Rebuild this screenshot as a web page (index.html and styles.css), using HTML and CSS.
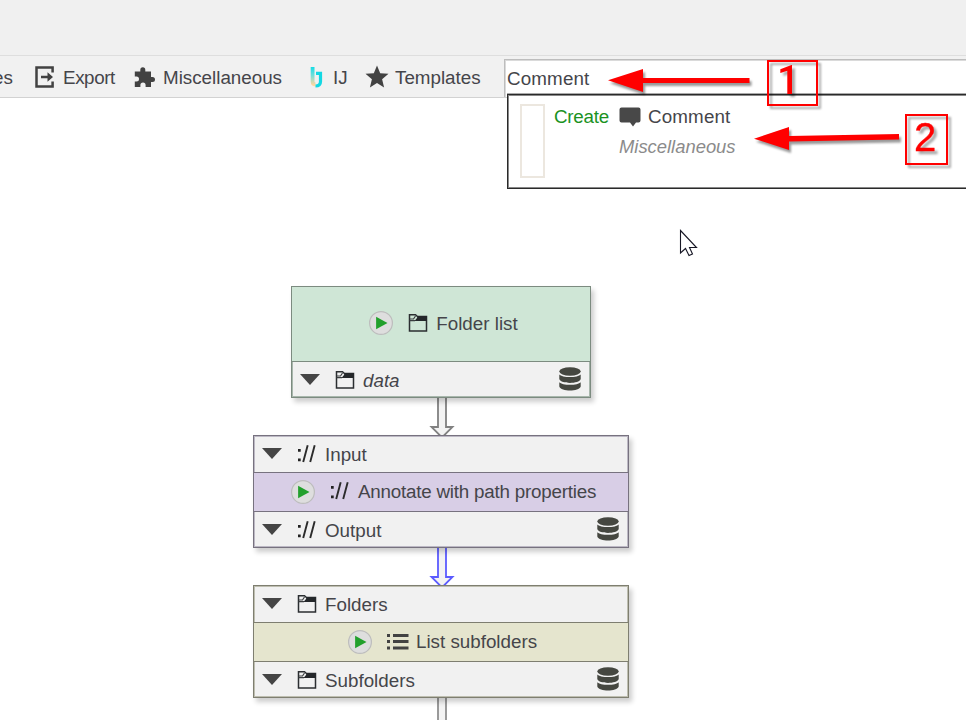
FILE: index.html
```html
<!DOCTYPE html>
<html lang="en">
<head>
<meta charset="utf-8">
<title>Workflow editor</title>
<link rel="stylesheet" href="styles.css">
</head>
<body>
<svg class="defs" width="0" height="0" aria-hidden="true">
  <defs>
    <symbol id="folder" viewBox="0 0 20 20"><path d="M1.5 18V1.8H7.5L9.5 3.5H18.5V18Z" fill="none" stroke="#2b2e31" stroke-width="1.5"/><path d="M9.5 3H19V8H6.5L9 5Z" fill="#24272a"/><path d="M1.5 7.7H7M2 6H5.5L7.5 3" fill="none" stroke="#3b3e40" stroke-width="1.2"/></symbol>
    <symbol id="db" viewBox="0 0 22 24"><g fill="#454740"><ellipse cx="11" cy="4.5" rx="10.7" ry="4.2"/><path d="M.3 7.4C3 10.8 19 10.8 21.7 7.4V12C20 17.2 2 17.2.3 12Z"/><path d="M.3 15.2C3 18.6 19 18.6 21.7 15.2V19.6C20 24.9 2 24.9.3 19.6Z"/></g></symbol>
    <symbol id="play" viewBox="0 0 26 26"><circle cx="13" cy="13" r="11.4" fill="#dedede" stroke="#bdbdbd" stroke-width="1.2"/><path d="M8.1 6.7 19.5 13 8.1 19.2Z" fill="#22a02c"/></symbol>
    <symbol id="path" viewBox="0 0 20 20"><path d="M1 5h2.7v2.7H1zM1 14.5h2.7v2.7H1z" fill="#222"/><path d="M6.2 18 10.7 1.2M13.2 18 17.7 1.2" fill="none" stroke="#2b2b2b" stroke-width="1.9"/></symbol>
    <symbol id="caret" viewBox="0 0 20 11"><path d="M0 0H20L10 11Z" fill="#454545"/></symbol>
    <symbol id="list" viewBox="0 0 22 16"><path d="M0 0h3v3H0zM0 6h3v3H0zM0 12.4h3v3H0zM6 0h15.5v3H6zM6 6h15.5v3H6zM6 12.4h15.5v3H6z" fill="#424242"/></symbol>
  </defs>
</svg>
<div class="app">
  <div class="titlebar"></div>
  <div class="toolbar">
    <span class="item es">es</span>
    <span class="item export"><svg width="20" height="22" viewBox="0 0 20 22"><path d="M17.6 6.5V1.6H1.5V20.4H17.6V15.5" fill="none" stroke="#424242" stroke-width="2.5"/><path d="M6 9.7h6.5V6.2L18 11 12.5 15.8V12.3H6Z" fill="#424242"/></svg><span>Export</span></span>
    <span class="item misc"><svg width="22" height="22" viewBox="0 0 22 22"><path d="M.8 5.5H6.3V4A2.5 2.8 0 0 1 11.3 4V5.5H17V11H18.5A2.5 2.5 0 0 1 18.5 16H17V21H11.6V19A2.6 2.6 0 0 0 6.4 19V21H.8V15.6H2.5A2.5 2.5 0 0 0 2.5 10.6H.8Z" fill="#424242"/></svg><span>Miscellaneous</span></span>
    <span class="item ij"><svg width="13" height="22" viewBox="0 0 13 22"><defs><linearGradient id="ijg" x1="0" y1="1" x2="0" y2="19" gradientUnits="userSpaceOnUse"><stop stop-color="#15dce5"/><stop offset=".45" stop-color="#6edfda"/><stop offset="1" stop-color="#ffd7a0"/></linearGradient></defs><path d="M2.6 1V15.5Q2.6 18.5 5.5 18.5" fill="none" stroke="url(#ijg)" stroke-width="3.8"/><path d="M6 7.4H10.5V15.5Q10.5 20 5.5 20" fill="none" stroke="#13d8e3" stroke-width="3.2"/></svg><span>IJ</span></span>
    <span class="item tpl"><svg width="24" height="23" viewBox="0 0 24 23"><path d="m12 .4 3.2 7.8 8.3.6-6.4 5.4 2 8.2L12 18l-7.1 4.4 2-8.2L.5 8.8l8.3-.6Z" fill="#424242"/></svg><span>Templates</span></span>
    <div class="search">Comment</div>
  </div>
  <div class="canvas">
    <svg class="links" width="966" height="622" viewBox="0 98 966 622">
      <g fill="#f3f3f3">
        <path d="M438 397V427H431.5L442 437.5 452.5 427H446V397" stroke="#818181" stroke-width="1.8"/>
        <path d="M438 547V577H431.5L442 587.5 452.5 577H446V547" stroke="#5b5bff" stroke-width="1.8"/>
        <path d="M438 697V722H446V697" stroke="#909090" stroke-width="1.8"/>
      </g>
    </svg>
    <section class="node source">
      <div class="head"><svg class="play"><use href="#play"/></svg><svg class="ic"><use href="#folder"/></svg><span class="label">Folder list</span></div>
      <div class="slot"><svg class="caret"><use href="#caret"/></svg><svg class="ic"><use href="#folder"/></svg><i class="label">data</i><svg class="db"><use href="#db"/></svg></div>
    </section>
    <section class="node annotate">
      <div class="slot"><svg class="caret"><use href="#caret"/></svg><svg class="ic"><use href="#path"/></svg><span class="label">Input</span></div>
      <div class="head"><svg class="play"><use href="#play"/></svg><svg class="ic"><use href="#path"/></svg><span class="label">Annotate with path properties</span></div>
      <div class="slot"><svg class="caret"><use href="#caret"/></svg><svg class="ic"><use href="#path"/></svg><span class="label">Output</span><svg class="db"><use href="#db"/></svg></div>
    </section>
    <section class="node subfolders">
      <div class="slot"><svg class="caret"><use href="#caret"/></svg><svg class="ic"><use href="#folder"/></svg><span class="label">Folders</span></div>
      <div class="head"><svg class="play"><use href="#play"/></svg><svg class="list"><use href="#list"/></svg><span class="label">List subfolders</span></div>
      <div class="slot"><svg class="caret"><use href="#caret"/></svg><svg class="ic"><use href="#folder"/></svg><span class="label">Subfolders</span><svg class="db"><use href="#db"/></svg></div>
    </section>
  </div>
  <div class="popup">
    <div class="swatch"></div>
    <span class="create">Create</span>
    <div class="result">
      <div class="name"><svg width="22" height="20" viewBox="0 0 22 20"><path d="M2.5.5h17q2 0 2 2v11q0 2-2 2H17L14 19.5 11 15.5H2.5q-2 0-2-2v-11q0-2 2-2Z" fill="#484848"/></svg><span>Comment</span></div>
      <div class="category">Miscellaneous</div>
    </div>
  </div>
  <svg class="pointer" width="20" height="29" viewBox="0 0 20 29"><path d="M1.5 1.5V24L6.5 19.5 10 26.5 13.5 25 10.5 18.5H17.5Z" fill="#fff" stroke="#171725" stroke-width="1.1"/></svg>
  <svg class="arrows" width="966" height="200" viewBox="0 0 966 200"><g fill="#f00"><path d="M608 80.3 643 69V78H749.5V83H643V92Z"/><path d="M754 138.7 789 127V136L899 134V139.5L789 141.5V150Z"/></g></svg>
  <div class="callout one"><span>1</span></div>
  <div class="callout two"><span>2</span></div>
</div>
</body>
</html>
```
FILE: styles.css
```css
* { box-sizing: border-box; }
body { margin: 0; background: #fff; color: #45454a; font: 18.8px/22px "Liberation Sans", Arial, sans-serif; }
svg { display: block; flex: none; }
.defs { position: absolute; }
.app { position: relative; width: 966px; height: 720px; overflow: hidden; }
.titlebar { height: 56px; background: #f0f0f0; border-bottom: 1px solid #dedede; }
.toolbar { display: flex; align-items: center; height: 42px; background: #f1f1f1; border-bottom: 1px solid #d2d2d2; white-space: nowrap; }
.item { display: flex; align-items: center; flex: none; }
.item span, .item.es { padding-top: 2px; }
.es { width: 35px; margin-left: -7px; }
.item.export { margin-left: 7px; width: 99px; gap: 8px; }
.item.export span { letter-spacing: -.4px; }
.misc { width: 174px; gap: 7px; }
.ij { width: 57px; padding-left: 2px; gap: 10px; }
.tpl { width: 139px; gap: 6px; }
.search { flex: 1; height: 38px; align-self: flex-end; background: #fff; border: solid #bdbdbd; border-width: 1px 0 0 1px; padding: 8px 2px; letter-spacing: .15px; box-shadow: inset 1px 1px #dadada; }
.canvas { position: relative; height: 622px; }
.links { position: absolute; left: 0; top: 0; }
.node { position: absolute; border: 1px solid var(--line); background: #f1f1f1; box-shadow: inset 0 0 0 1px var(--soft), 3px 4px 5px #0003; }
.source { --line: #7c8b80; --soft: #a8b7ac; left: 291px; top: 188px; width: 300px; height: 112px; }
.annotate { --line: #77727f; --soft: #bcb8c4; left: 253px; top: 337px; width: 376px; height: 113px; }
.subfolders { --line: #7e7e70; --soft: #bebeb0; left: 253px; top: 487px; width: 376px; height: 113px; }
.slot { display: flex; align-items: center; height: 36px; padding: 0 9px 0 8px; }
.head { display: flex; align-items: center; justify-content: center; height: 40px; border: solid var(--line); border-width: 1px 0; }
.source .head { height: 75px; background: #cfe6d6; border-top: 0; padding: 0 0 2px 4px; }
.annotate .head { background: #d8cee6; padding: 0 0 1px 4px; }
.subfolders .head { background: #e5e5ce; padding: 0 0 1px 2px; }
.annotate .head .label { letter-spacing: -.21px; }
.caret { width: 20px; height: 11px; margin-bottom: 1px; }
.ic { width: 20px; height: 20px; margin: 0 0 1px 15px; }
.label { margin-left: 8px; white-space: nowrap; padding-top: 1px; }
.db { width: 22px; height: 24px; margin: 0 0 2px auto; }
.play { width: 26px; height: 26px; }
.head .ic { margin-left: 14px; }
.list { width: 22px; height: 16px; margin-left: 14px; }
.list + .label { margin-left: 7px; }
.popup { position: absolute; left: 507px; top: 94px; width: 470px; height: 95px; border: 1px solid #2a2a2a; background: #fff; box-shadow: inset 1px 1px #888, 0 -1px #aaa, inset 0 -1px #888; display: flex; padding: 9px 12px; }
.swatch { width: 25px; height: 74px; border: 2px solid #ece7df; }
.create { color: #1b921f; margin: 2px 0 0 9px; width: 65px; letter-spacing: -.25px; }
.name { display: flex; align-items: center; gap: 7px; margin-top: 2px; letter-spacing: .15px; }
.category { margin-top: 8px; color: #8b8b8b; font-style: italic; font-size: 18.4px; }
.pointer { position: absolute; left: 679px; top: 229px; }
.arrows { position: absolute; left: 0; top: 0; filter: drop-shadow(2px 3px 1px #0006); }
.callout { position: absolute; border: 2px solid #f00; color: #f00; filter: drop-shadow(3px 3px 1px #0005); }
.one { left: 767px; top: 60px; width: 51px; height: 46px; font: 500 40px/38px Roboto, sans-serif; padding-left: 8px; }
.two { left: 905px; top: 114px; width: 43px; height: 51px; font-size: 40px; line-height: 42px; padding-left: 7px; -webkit-text-stroke: .4px #f00; }
```
